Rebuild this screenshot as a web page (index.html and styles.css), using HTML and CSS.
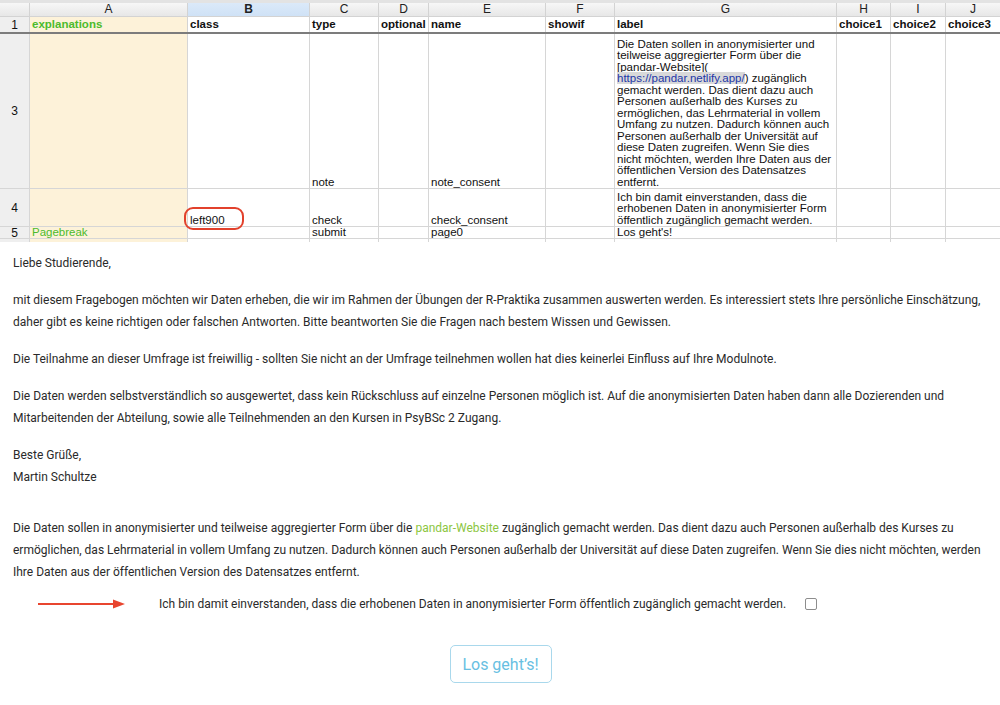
FILE: index.html
```html
<!DOCTYPE html>
<html lang="de">
<head>
<meta charset="utf-8">
<title>Sheet and form</title>
<link rel="stylesheet" href="styles.css">
</head>
<body>
<div class="page">
  <div class="sheet">
    <div class="topstrip"></div>
    <div class="grid head">
      <div class="corner"></div>
      <div class="colh">A</div>
      <div class="colh sel">B</div>
      <div class="colh">C</div>
      <div class="colh">D</div>
      <div class="colh">E</div>
      <div class="colh">F</div>
      <div class="colh">G</div>
      <div class="colh">H</div>
      <div class="colh">I</div>
      <div class="colh">J</div>

      <div class="rowh">1</div>
      <div class="c a hdr green">explanations</div>
      <div class="c hdr">class</div>
      <div class="c hdr">type</div>
      <div class="c hdr">optional</div>
      <div class="c hdr">name</div>
      <div class="c hdr">showif</div>
      <div class="c hdr">label</div>
      <div class="c hdr">choice1</div>
      <div class="c hdr">choice2</div>
      <div class="c hdr">choice3</div>
    </div>
    <div class="freeze"></div>
    <div class="grid body">
      <div class="rowh">3</div>
      <div class="c a"></div>
      <div class="c"></div>
      <div class="c">note</div>
      <div class="c"></div>
      <div class="c">note_consent</div>
      <div class="c"></div>
      <div class="c"><div class="label">Die Daten sollen in anonymisierter und<br>teilweise aggregierter Form über die<br>[pandar-Website](<br><span class="link">https://pandar.netlify.app/</span>) zugänglich<br>gemacht werden. Das dient dazu auch<br>Personen außerhalb des Kurses zu<br>ermöglichen, das Lehrmaterial in vollem<br>Umfang zu nutzen. Dadurch können auch<br>Personen außerhalb der Universität auf<br>diese Daten zugreifen. Wenn Sie dies<br>nicht möchten, werden Ihre Daten aus der<br>öffentlichen Version des Datensatzes<br>entfernt.</div></div>
      <div class="c"></div>
      <div class="c"></div>
      <div class="c"></div>

      <div class="rowh">4</div>
      <div class="c a"></div>
      <div class="c">left900</div>
      <div class="c">check</div>
      <div class="c"></div>
      <div class="c">check_consent</div>
      <div class="c"></div>
      <div class="c"><div class="label">Ich bin damit einverstanden, dass die<br>erhobenen Daten in anonymisierter Form<br>öffentlich zugänglich gemacht werden.</div></div>
      <div class="c"></div>
      <div class="c"></div>
      <div class="c"></div>

      <div class="rowh">5</div>
      <div class="c a mid green">Pagebreak</div>
      <div class="c mid"></div>
      <div class="c mid">submit</div>
      <div class="c mid"></div>
      <div class="c mid">page0</div>
      <div class="c mid"></div>
      <div class="c mid">Los geht's!</div>
      <div class="c mid"></div>
      <div class="c mid"></div>
      <div class="c mid"></div>

      <div class="rowh"></div>
      <div class="c a"></div>
      <div class="c"></div>
      <div class="c"></div>
      <div class="c"></div>
      <div class="c"></div>
      <div class="c"></div>
      <div class="c"></div>
      <div class="c"></div>
      <div class="c"></div>
      <div class="c"></div>
    </div>
    <div class="oval"></div>
  </div>

  <div class="form">
    <p>Liebe Studierende,</p>
    <p>mit diesem Fragebogen möchten wir Daten erheben, die wir im Rahmen der Übungen der R-Praktika zusammen auswerten werden. Es interessiert stets Ihre persönliche Einschätzung, daher gibt es keine richtigen oder falschen Antworten. Bitte beantworten Sie die Fragen nach bestem Wissen und Gewissen.</p>
    <p>Die Teilnahme an dieser Umfrage ist freiwillig - sollten Sie nicht an der Umfrage teilnehmen wollen hat dies keinerlei Einfluss auf Ihre Modulnote.</p>
    <p>Die Daten werden selbstverständlich so ausgewertet, dass kein Rückschluss auf einzelne Personen möglich ist. Auf die anonymisierten Daten haben dann alle Dozierenden und Mitarbeitenden der Abteilung, sowie alle Teilnehmenden an den Kursen in PsyBSc 2 Zugang.</p>
    <p>Beste Grüße,<br>Martin Schultze</p>
    <p class="note">Die Daten sollen in anonymisierter und teilweise aggregierter Form über die <span class="plink">pandar-Website</span> zugänglich gemacht werden. Das dient dazu auch Personen außerhalb des Kurses zu ermöglichen, das Lehrmaterial in vollem Umfang zu nutzen. Dadurch können auch Personen außerhalb der Universität auf diese Daten zugreifen. Wenn Sie dies nicht möchten, werden Ihre Daten aus der öffentlichen Version des Datensatzes entfernt.</p>
    <div class="check">
      <svg class="arrow" width="88" height="10" viewBox="0 0 88 10"><line x1="0" y1="5" x2="78" y2="5" stroke="#e8452f" stroke-width="2"/><polygon points="75,0.5 87,5 75,9.5" fill="#e8452f"/></svg>
      <span class="checktext">Ich bin damit einverstanden, dass die erhobenen Daten in anonymisierter Form öffentlich zugänglich gemacht werden.</span>
      <span class="box"></span>
    </div>
    <div class="btnrow">
      <button class="btn" type="button">Los geht’s!</button>
    </div>
  </div>
</div>
</body>
</html>
```

FILE: styles.css
```css
html, body {
  margin: 0;
  padding: 0;
  background: #ffffff;
}

.page {
  width: 1000px;
}

.sheet {
  position: relative;
  font-family: "Liberation Sans", Arial, sans-serif;
  font-size: 11.5px;
  color: #111;
}

.topstrip {
  height: 3px;
  background: #e3e3e3;
}

.grid {
  display: grid;
  grid-template-columns: 29px 157px 121px 68px 49px 116px 68px 221px 53px 54px 54px;
  column-gap: 1px;
  row-gap: 1px;
  background: #d3d3d3;
}

.head {
  grid-template-rows: 13px 15px;
}

.corner,
.colh {
  background: linear-gradient(#f7f7f7, #e7e7e7);
}

.colh {
  text-align: center;
  line-height: 13px;
  font-size: 12px;
  color: #222;
}

.colh.sel {
  background: linear-gradient(#dbe9f9, #cfe2f6);
  font-weight: bold;
}

.rowh {
  background: #efefef;
  display: flex;
  align-items: center;
  justify-content: center;
  font-size: 12px;
  color: #111;
  overflow: hidden;
}

.c {
  background: #ffffff;
  padding: 0 2px;
  display: flex;
  align-items: flex-end;
  white-space: nowrap;
  line-height: 11.5px;
  min-width: 0;
}

.c.a {
  background: #fdf2d9;
}

.c.hdr {
  font-weight: bold;
  align-items: center;
  line-height: 15px;
}

.c.mid {
  align-items: center;
}

.green {
  color: #4cbb2c;
}

.label {
  display: block;
}

.link {
  color: #2236a8;
  background: #d9d9d9;
}

.freeze {
  height: 2px;
  background: #7c7c7c;
}

.body {
  grid-template-rows: 154px 37px 11px 3px;
  background: #d6d6d6;
}

.oval {
  position: absolute;
  left: 184px;
  top: 207px;
  width: 60px;
  height: 23px;
  box-sizing: border-box;
  border: 2px solid #e2412c;
  border-radius: 9px;
}

.form {
  padding: 10px 12px 0 13px;
  font-family: Roboto, "Noto Sans", sans-serif;
  font-size: 12px;
  line-height: 22px;
  color: #2a2a2a;
}

.form p {
  margin: 0 0 15px;
}

.form p.note {
  margin-top: 29px;
  margin-bottom: 10px;
}

.plink {
  color: #8cc63f;
}

.check {
  position: relative;
  display: flex;
  align-items: center;
  padding-left: 146px;
  gap: 19px;
}

.arrow {
  position: absolute;
  left: 25px;
  top: 6px;
}

.box {
  width: 12px;
  height: 12px;
  box-sizing: border-box;
  border: 1.5px solid #8d8d8d;
  border-radius: 2px;
  background: #fff;
}

.btnrow {
  display: flex;
  justify-content: center;
  margin-top: 30px;
}

.btn {
  width: 102px;
  height: 38px;
  border: 1px solid #a9d8ec;
  border-radius: 5px;
  background: #ffffff;
  color: #68bfe2;
  font-family: Roboto, "Noto Sans", sans-serif;
  font-size: 16px;
  padding: 0;
}
```
